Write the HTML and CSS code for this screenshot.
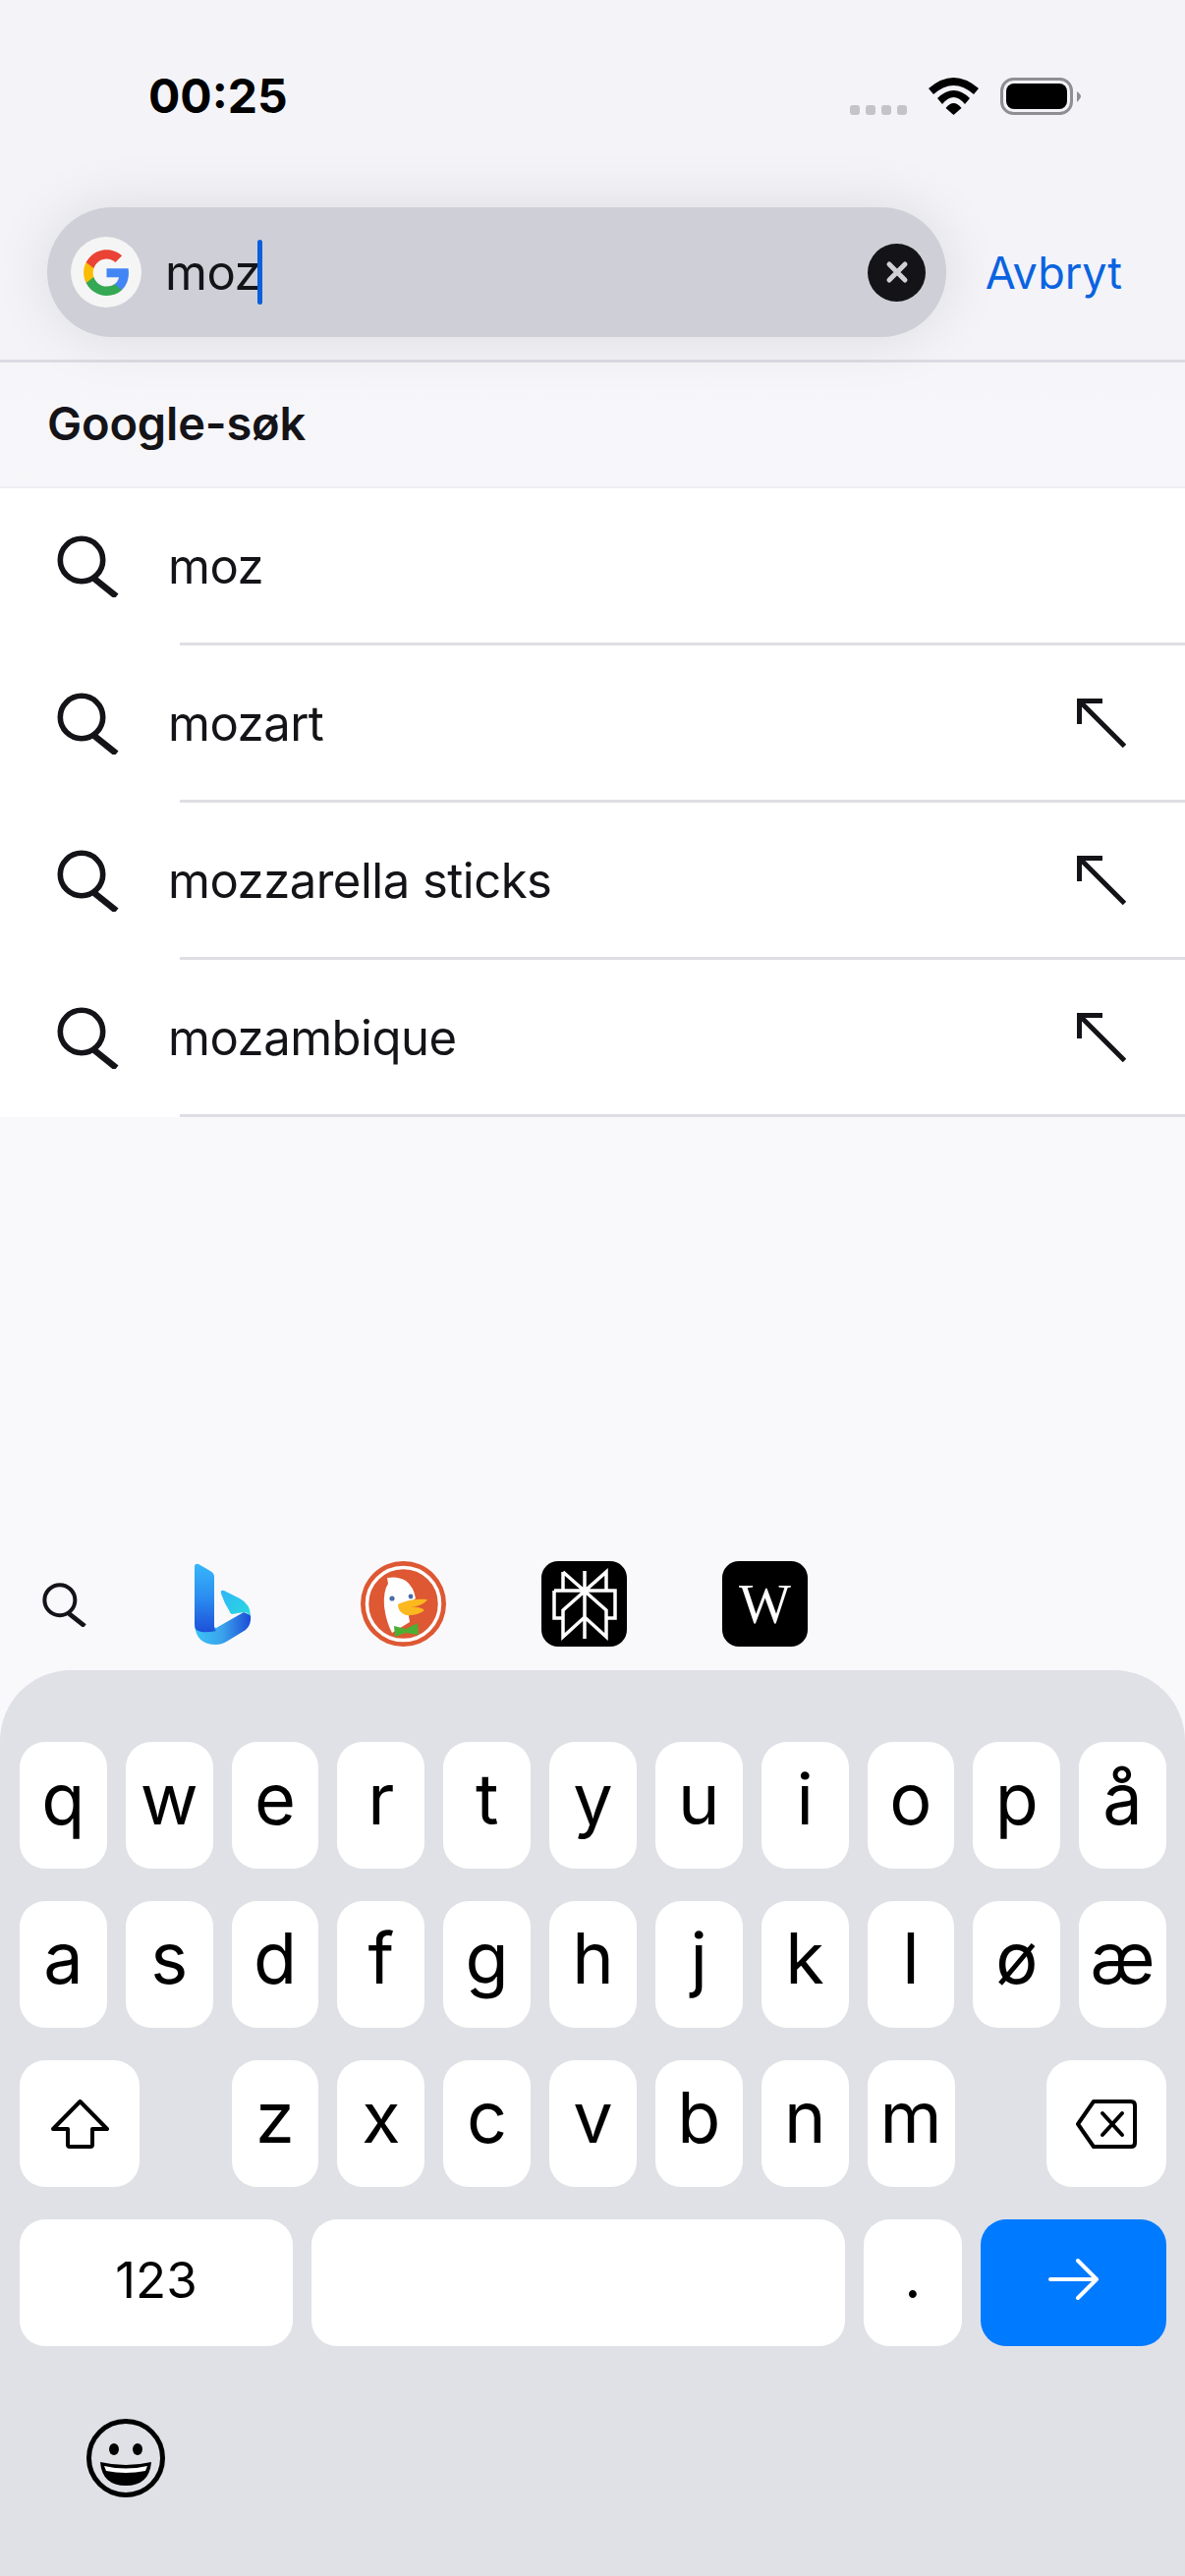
FILE: index.html
```html
<!DOCTYPE html>
<html lang="nb">

<head>
    <meta charset="UTF-8">
    <meta name="viewport" content="width=device-width, initial-scale=1.0">
    <title>Søk</title>
    <link rel="stylesheet" href="styles.css">
</head>

<body>
    <svg class="defs" width="0" height="0">
        <symbol id="mag" viewBox="0 0 63 64">
            <circle cx="25" cy="26" r="21.7" fill="none" stroke="#141418" stroke-width="5.6" />
            <path d="M38 45 L60.5 63" fill="none" stroke="#141418" stroke-width="6.6" />
        </symbol>
        <symbol id="fill" viewBox="0 0 50 50">
            <path d="M2.5 26 V2.5 H26 M2.5 2.5 L48.5 48.5" fill="none" stroke="#141418" stroke-width="5" />
        </symbol>
    </svg>

    <!-- topp -->
    <header class="top">
        <div class="status">
            <span class="time">00:25</span>
            <div class="status-icons">
                <div class="dots"><i></i><i></i><i></i><i></i></div>
                <svg width="51" height="38" viewBox="0 0 51 38">
                    <path d="M0 11 Q25.5 -11 51 11 L46 17 Q25.5 -1 5 17Z" />
                    <path d="M9 21 Q25.5 5 42 21 L37 27 Q25.5 13 14 27Z" />
                    <path d="M17.5 31 Q25.5 21 33.5 31 L25.5 38Z" />
                </svg>
                <svg width="82" height="38" viewBox="0 0 82 38">
                    <rect x="1.5" y="1.5" width="71" height="35" rx="12" fill="none" stroke="#8e8e93" stroke-width="3" />
                    <rect x="6" y="6" width="62" height="26" rx="8" />
                    <path d="M78 14 Q82 17 82 19 Q82 21 78 25Z" fill="#8e8e93" />
                </svg>
            </div>
        </div>
        <div class="search-row">
            <div class="pill">
                <span class="g-badge">
                    <svg width="51" height="51" viewBox="0 0 24 24">
                        <path fill="#4285F4" d="M22.56 12.25c0-.78-.07-1.53-.2-2.25H12v4.26h5.92c-.26 1.37-1.04 2.53-2.21 3.31v2.77h3.57c2.08-1.92 3.28-4.74 3.28-8.09z" />
                        <path fill="#34A853" d="M12 23c2.97 0 5.46-.98 7.28-2.66l-3.57-2.77c-.98.66-2.23 1.06-3.71 1.06-2.86 0-5.29-1.93-6.16-4.53H2.18v2.84C3.99 20.53 7.7 23 12 23z" />
                        <path fill="#FBBC05" d="M5.84 14.09c-.22-.66-.35-1.36-.35-2.09s.13-1.43.35-2.09V7.07H2.18C1.43 8.55 1 10.22 1 12s.43 3.45 1.18 4.93l2.85-2.22.81-.62z" />
                        <path fill="#EA4335" d="M12 5.38c1.62 0 3.06.56 4.21 1.64l3.15-3.15C17.45 2.09 14.97 1 12 1 7.7 1 3.99 3.47 2.18 7.07l3.66 2.84c.87-2.6 3.3-4.53 6.16-4.53z" />
                    </svg>
                </span>
                <span class="query">moz</span>
                <span class="caret"></span>
                <span class="clear">
                    <svg width="24" height="24" viewBox="0 0 24 24">
                        <path d="M4 4 L20 20 M20 4 L4 20" stroke="#d0d0d7" stroke-width="5" stroke-linecap="round" />
                    </svg>
                </span>
            </div>
            <span class="cancel">Avbryt</span>
        </div>
    </header>

    <div class="section-title">Google-søk</div>

    <!-- forslag -->
    <ul class="results">
        <li>
            <div class="row">
                <svg class="mag" width="63" height="64"><use href="#mag" /></svg>
                <span class="label">moz</span>
            </div>
            <div class="sep"></div>
        </li>
        <li>
            <div class="row">
                <svg class="mag" width="63" height="64"><use href="#mag" /></svg>
                <span class="label">mozart</span>
                <svg class="fill" width="50" height="50"><use href="#fill" /></svg>
            </div>
            <div class="sep"></div>
        </li>
        <li>
            <div class="row">
                <svg class="mag" width="63" height="64"><use href="#mag" /></svg>
                <span class="label">mozzarella sticks</span>
                <svg class="fill" width="50" height="50"><use href="#fill" /></svg>
            </div>
            <div class="sep"></div>
        </li>
        <li>
            <div class="row">
                <svg class="mag" width="63" height="64"><use href="#mag" /></svg>
                <span class="label">mozambique</span>
                <svg class="fill" width="50" height="50"><use href="#fill" /></svg>
            </div>
            <div class="sep"></div>
        </li>
    </ul>

    <div class="spacer"></div>

    <!-- søkemotorer -->
    <div class="engines">
        <svg class="engine-search" width="45" height="46"><use href="#mag" /></svg>
        <span class="engine blurry">
            <svg width="58" height="83" viewBox="0 0 58 83">
                <defs>
                    <linearGradient id="bingStem" x1="0" y1="0" x2="0" y2="1">
                        <stop offset="0" stop-color="#37b6fb" />
                        <stop offset=".5" stop-color="#2b8cf0" />
                        <stop offset="1" stop-color="#1d50d8" />
                    </linearGradient>
                    <linearGradient id="bingBand" x1="0" y1="0" x2="1" y2="0">
                        <stop offset="0" stop-color="#3cc4f7" />
                        <stop offset=".5" stop-color="#3aa2ec" />
                        <stop offset="1" stop-color="#1b4cd6" />
                    </linearGradient>
                    <linearGradient id="bingTip" x1="0" y1="0" x2="1" y2="1">
                        <stop offset="0" stop-color="#30b4fa" />
                        <stop offset="1" stop-color="#28dcdc" />
                    </linearGradient>
                </defs>
                <path fill="url(#bingBand)" d="M0 62 Q1 83 22 83 Q28 83 34 79 L52 68 Q58 63 57 53 L50 50 L22 66 L6 60Z" />
                <path fill="url(#bingStem)" d="M0 4 Q0 0 4 1 L16 8 Q20 10 20 14 L20 64 Q20 68 22 69 Q8 72 2 68 Q0 66 0 62Z" />
                <path fill="url(#bingTip)" d="M27 31 Q26 27 30 28 L46 36 Q57 42 57 54 Q54 50 50 50 L38 52 Q36 51 35 48 L31 41Z" />
            </svg>
        </span>
        <span class="engine blurry">
            <svg width="87" height="87" viewBox="0 0 87 87">
                <circle cx="43.5" cy="43.5" r="43.5" fill="#de5833" />
                <circle cx="43.5" cy="43.5" r="37" fill="none" stroke="#fff" stroke-width="3.5" />
                <path fill="#fff" d="M27 17 Q38 15 46 20 Q54 26 56 38 L47 44 L50 62 L32 73 Q26 62 24 46 Q23 30 28 23Z" />
                <circle cx="32" cy="38" r="2.6" fill="#4a6aa8" />
                <circle cx="51" cy="36" r="2.4" fill="#4a6aa8" />
                <path fill="#fbb81f" d="M38 44 Q50 38 68 39 Q66 44 52 47 Q60 46 65 50 Q58 56 46 55 Q38 52 38 44Z" />
                <path fill="#4caf34" d="M34 66 L46 69 L58 63 L59 75 L46 73 L35 77Z" />
            </svg>
        </span>
        <span class="engine tile">
            <svg width="86" height="86" viewBox="0 0 86 86">
                <path d="M43 9 V78 M21 10 L65 49 V76 L43 56 L21 76 V49 L65 10 V29 M21 10 V29 M12 29 H74 V57 H65 M12 29 V57 H21" fill="none" stroke="#fff" stroke-width="3.5" />
            </svg>
        </span>
        <span class="engine tile wiki">W</span>
    </div>

    <!-- tastatur -->
    <div class="keyboard">
        <div class="key-row">
            <span class="key">q</span><span class="key">w</span><span class="key">e</span><span class="key">r</span><span class="key">t</span><span class="key">y</span><span class="key">u</span><span class="key">i</span><span class="key">o</span><span class="key">p</span><span class="key">å</span>
        </div>
        <div class="key-row">
            <span class="key">a</span><span class="key">s</span><span class="key">d</span><span class="key">f</span><span class="key">g</span><span class="key">h</span><span class="key">j</span><span class="key">k</span><span class="key">l</span><span class="key">ø</span><span class="key">æ</span>
        </div>
        <div class="key-row row-three">
            <span class="key side">
                <svg width="59" height="50" viewBox="0 0 59 50">
                    <path d="M29.5 2 L57 30 H42 V46 Q42 48 40 48 H19 Q17 48 17 46 V30 H2Z" fill="none" stroke="#000" stroke-width="4" stroke-linejoin="round" />
                </svg>
            </span>
            <div class="letters">
                <span class="key">z</span><span class="key">x</span><span class="key">c</span><span class="key">v</span><span class="key">b</span><span class="key">n</span><span class="key">m</span>
            </div>
            <span class="key side">
                <svg width="62" height="50" viewBox="0 0 62 50">
                    <path d="M18 2 H56 Q60 2 60 6 V44 Q60 48 56 48 H18 L2 25Z" fill="none" stroke="#000" stroke-width="4" stroke-linejoin="round" />
                    <path d="M27 14 L47 36 M47 14 L27 36" stroke="#000" stroke-width="4" stroke-linecap="round" />
                </svg>
            </span>
        </div>
        <div class="key-row row-four">
            <span class="key num">123</span>
            <span class="key space"></span>
            <span class="key dot">.</span>
            <span class="key go">
                <svg width="51" height="42" viewBox="0 0 51 42">
                    <path d="M2 21 H48 M30 2 L49 21 L30 40" fill="none" stroke="#fff" stroke-width="4" stroke-linecap="round" stroke-linejoin="round" />
                </svg>
            </span>
        </div>
        <div class="kb-foot">
            <svg width="80" height="80" viewBox="0 0 80 80">
                <circle cx="40" cy="40" r="37.5" fill="none" stroke="#000" stroke-width="5" />
                <ellipse cx="28" cy="31" rx="5" ry="6" />
                <ellipse cx="52" cy="31" rx="5" ry="6" />
                <path d="M14 44 Q40 50 66 44 Q64 68 40 68 Q16 68 14 44Z" />
                <path d="M18 48 Q40 53 62 48 L60 53 Q40 57 20 53Z" fill="#fff" />
            </svg>
        </div>
    </div>
</body>

</html>
```

FILE: styles.css
```css
* {
    margin: 0;
    padding: 0;
    box-sizing: border-box;
}

body {
    width: 1206px;
    height: 2622px;
    overflow: hidden;
    display: flex;
    flex-direction: column;
    font-family: Inter, "Liberation Sans", sans-serif;
    color: #141418;
    background: linear-gradient(#f3f3f8, #f9f9fb 30%);
}

li {
    list-style: none;
}

.defs {
    position: absolute;
}

/* topp */
.top {
    position: relative;
    z-index: 1;
    height: 369px;
    background-color: #f3f3f8;
    border-bottom: 3px solid #dcdce3;
}

.status {
    height: 195px;
    padding: 0 106px 0 151px;
    display: flex;
    align-items: center;
    justify-content: space-between;
}

.time {
    font-size: 48px;
    font-weight: 700;
    color: #000;
}

.status-icons {
    display: flex;
    align-items: flex-end;
    gap: 22px;
}

.dots {
    display: flex;
    gap: 6px;
}

.dots i {
    width: 10px;
    height: 10px;
    border-radius: 3px;
    background-color: #c4c4c8;
}

.search-row {
    margin-top: 16px;
    padding: 0 64px 0 48px;
    display: flex;
    align-items: center;
    justify-content: space-between;
}

.pill {
    width: 915px;
    height: 132px;
    padding: 0 21px 0 24px;
    border-radius: 66px;
    background-color: #cfcfd7;
    box-shadow: 0 0 60px rgba(0, 0, 0, .1);
    display: flex;
    align-items: center;
}

.g-badge {
    width: 72px;
    height: 72px;
    border-radius: 50%;
    background-color: #f5f5f5;
    display: flex;
    align-items: center;
    justify-content: center;
}

.query {
    margin-left: 24px;
    font-size: 49px;
    letter-spacing: -.5px;
}

.caret {
    width: 5px;
    height: 66px;
    margin-left: -3px;
    border-radius: 3px;
    background-color: #0a5fdc;
}

.clear {
    margin-left: auto;
    width: 59px;
    height: 59px;
    border-radius: 50%;
    background-color: #141418;
    display: flex;
    align-items: center;
    justify-content: center;
}

.cancel {
    font-size: 45px;
    color: #0a63e0;
}

.section-title {
    height: 128px;
    padding: 0 0 3px 48px;
    display: flex;
    align-items: center;
    font-size: 47px;
    font-weight: 600;
    letter-spacing: -.2px;
    border-bottom: 2px solid #eeeef2;
}

/* forslag */
.results {
    background-color: #fff;
}

.row {
    height: 157px;
    display: flex;
    align-items: center;
    padding: 0 60px 0 58px;
}

.label {
    margin-left: 50px;
    padding-top: 2px;
    font-size: 49px;
    letter-spacing: -.5px;
    flex: 1;
}

.sep {
    height: 3px;
    margin-left: 183px;
    background-color: #dedee4;
}

.spacer {
    flex: 1;
}

/* søkemotorer */
.engines {
    height: 87px;
    margin-bottom: 24px;
    padding-left: 43px;
    display: flex;
    align-items: center;
    gap: 97px;
}

.engine-search {
    margin-right: -2px;
}

.engine {
    width: 87px;
    height: 87px;
    display: flex;
    align-items: center;
    justify-content: center;
}

.blurry svg {
    filter: blur(.6px);
}

.tile {
    background-color: #000;
    border-radius: 17px;
}

.wiki {
    color: #fff;
    font-family: "Liberation Serif", serif;
    font-size: 56px;
}

/* tastatur */
.keyboard {
    height: 922px;
    padding: 73px 19px 0 20px;
    background-color: #e0e1e6;
    border-radius: 72px 72px 0 0;
    display: flex;
    flex-direction: column;
    gap: 33px;
}

.key-row {
    height: 129px;
    display: flex;
    gap: 19px;
}

.key {
    flex: 1;
    padding-bottom: 13px;
    border-radius: 26px;
    background-color: #fff;
    color: #000;
    font-size: 72px;
    line-height: 1;
    display: flex;
    align-items: center;
    justify-content: center;
}

.row-three {
    justify-content: space-between;
}

.side {
    flex: none;
    width: 122px;
    padding-bottom: 0;
}

.letters {
    width: 736px;
    display: flex;
    gap: 19px;
}

.num {
    flex: none;
    width: 278px;
    font-size: 51px;
    padding-bottom: 6px;
}

.space {
    flex: 1;
}

.dot {
    flex: none;
    width: 100px;
    font-size: 60px;
}

.go {
    flex: none;
    width: 189px;
    padding-bottom: 8px;
    background-color: #007aff;
}

.kb-foot {
    margin-top: 41px;
    padding-left: 68px;
}
```
